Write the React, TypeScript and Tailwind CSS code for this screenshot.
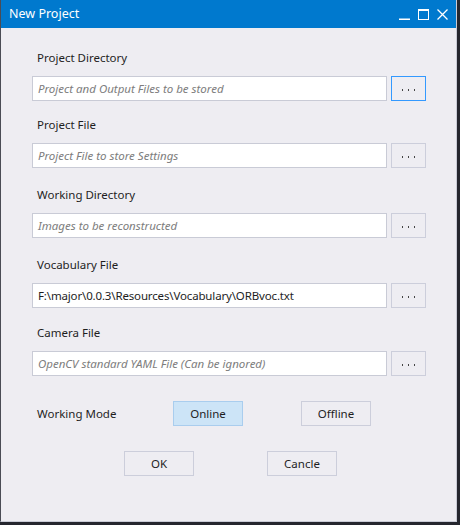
import React from "react";

const fields = [
  { label: "Project Directory", placeholder: "Project and Output Files to be stored", value: "", focused: true, mt: "mt-[22px]" },
  { label: "Project File", placeholder: "Project File to store Settings", value: "", focused: false, mt: "mt-[16px]" },
  { label: "Working Directory", placeholder: "Images to be reconstructed", value: "", focused: false, mt: "mt-[19px]" },
  { label: "Vocabulary File", placeholder: "", value: "F:\\major\\0.0.3\\Resources\\Vocabulary\\ORBvoc.txt", focused: false, mt: "mt-[19px]" },
  { label: "Camera File", placeholder: "OpenCV standard YAML File (Can be ignored)", value: "", focused: false, mt: "mt-[17px]" },
];

const font = { fontFamily: '"Segoe UI", "Noto Sans", Arial, sans-serif' };

const Field = ({ label, placeholder, value, focused, mt }: (typeof fields)[number]) => (
  <div className={`${mt} flex flex-col`}>
    <div className="h-[26px] pl-[36px] text-[11.5px] leading-[16px] text-[#1e1e1e]">{label}</div>
    <div className="flex gap-[4px] pl-[31px]">
      <div className="flex h-[25px] w-[355px] items-center border border-[#c9cbd6] bg-white px-[5px] text-[11.5px]">
        {value ? (
          <span className="tracking-[-0.15px] text-[#1e1e1e]">{value}</span>
        ) : (
          <span className="italic text-[#7d7d7d]">{placeholder}</span>
        )}
      </div>
      <button
        className={`flex h-[25px] w-[35px] items-center justify-center border bg-[#eeedf2] text-[#333] ${
          focused ? "border-[#3399ff]" : "border-[#cccedb]"
        }`}
      >
        <span className="flex gap-[5px] pt-[3px]">
          <span className="h-[2px] w-[1px] bg-[#444]" />
          <span className="h-[2px] w-[1px] bg-[#444]" />
          <span className="h-[2px] w-[1px] bg-[#444]" />
        </span>
      </button>
    </div>
  </div>
);

export default function App() {
  return (
    <div className="h-[525px] w-[460px] bg-[#25262e]" style={font}>
      <div className="flex h-[522px] w-[457px] flex-col border-b border-l border-r border-b-[#c9cbd6] border-l-[#4a4c55] border-r-[#c9cbd6] bg-[#eeedf2]">
        {/* title bar */}
        <div className="flex h-[28px] items-center justify-between bg-[#0079ce] pl-[8px] pr-[8px] text-white">
          <span className="text-[12.5px]">New Project</span>
          <div className="flex items-center gap-[8px]">
            <svg width="11" height="11" viewBox="0 0 11 11">
              <rect x="0" y="9.5" width="11" height="1.5" fill="white" />
            </svg>
            <svg width="11" height="11" viewBox="0 0 11 11">
              <rect x="0.5" y="0.5" width="10" height="10" fill="none" stroke="white" />
              <rect x="0" y="0" width="11" height="2" fill="white" />
            </svg>
            <svg width="11" height="11" viewBox="0 0 11 11">
              <path d="M0.5 0.5 L10.5 10.5 M10.5 0.5 L0.5 10.5" stroke="white" strokeWidth="1.3" />
            </svg>
          </div>
        </div>

        {fields.map((f) => (
          <Field key={f.label} {...f} />
        ))}

        {/* working mode */}
        <div className="mt-[25px] flex items-center pl-[36px] text-[11.5px] text-[#1e1e1e]">
          <span className="w-[136px]">Working Mode</span>
          <button className="h-[25px] w-[70px] border border-[#a9cdee] bg-[#cce4f7]">Online</button>
          <button className="ml-[58px] h-[25px] w-[70px] border border-[#cccedb] bg-[#eeedf2]">Offline</button>
        </div>

        <div className="mt-[25px] flex pl-[123px] text-[11.5px] text-[#1e1e1e]">
          <button className="h-[25px] w-[70px] border border-[#cccedb] bg-[#eeedf2]">OK</button>
          <button className="ml-[73px] h-[25px] w-[70px] border border-[#cccedb] bg-[#eeedf2]">Cancle</button>
        </div>
      </div>
    </div>
  );
}
